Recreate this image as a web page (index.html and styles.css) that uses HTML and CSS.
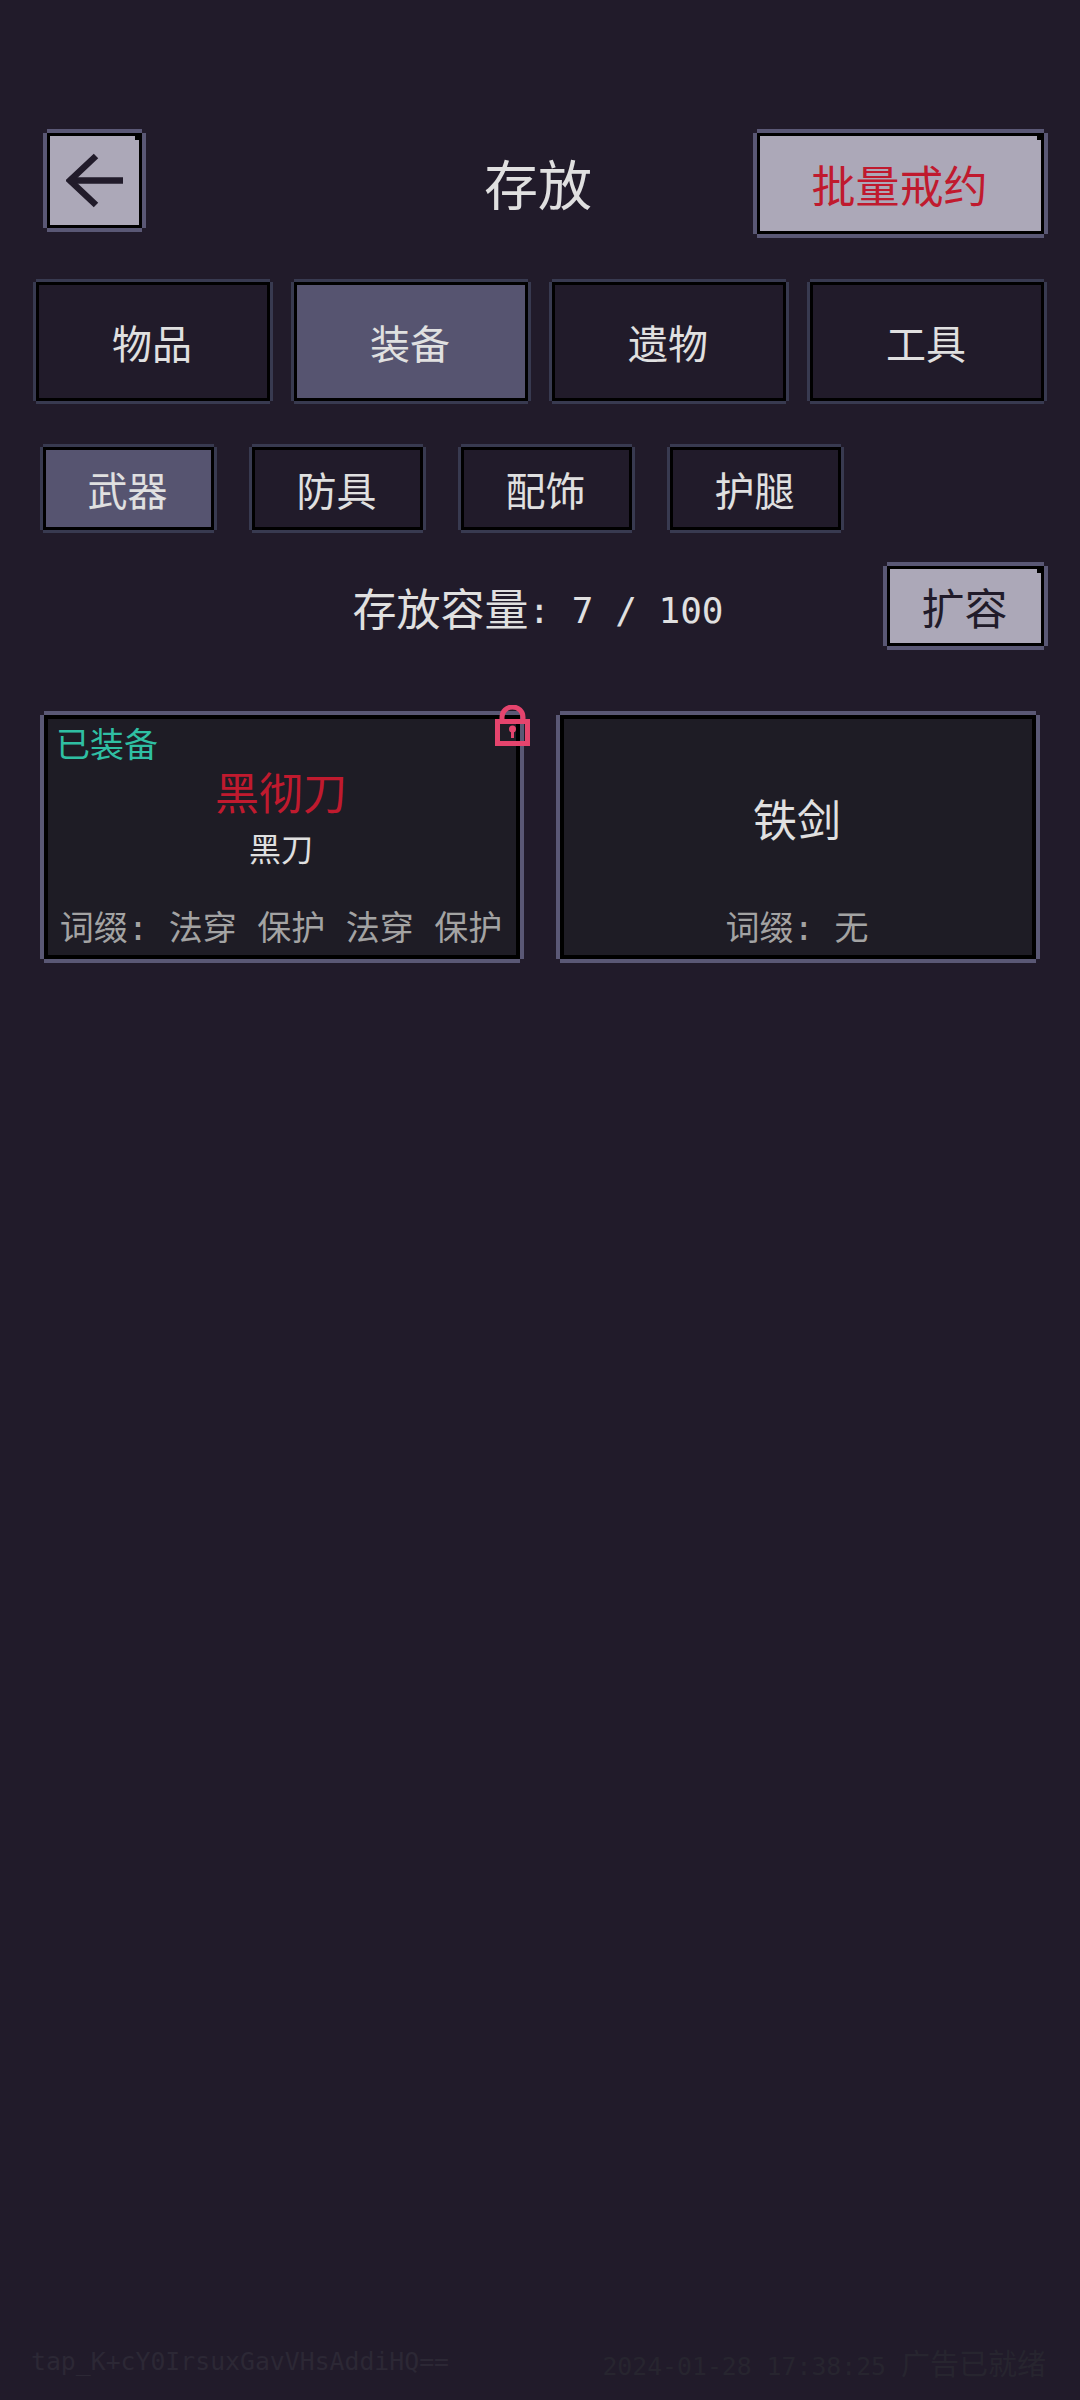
FILE: index.html
```html
<!DOCTYPE html>
<html lang="zh-CN">
<head>
    <meta charset="UTF-8">
    <meta name="viewport" content="width=device-width, initial-scale=1.0">
    <title>存放</title>
    <link rel="stylesheet" href="styles.css">
</head>
<body>
    <div class="page">
        <header class="top-bar">
            <button class="pix raised back-btn" aria-label="返回">
                <svg class="back-icon" viewBox="0 0 57 57">
                    <path d="M30 4 L4 28.5 L30 53" />
                    <path d="M4 28.5 H57" />
                </svg>
            </button>
            <h1 class="title">存放</h1>
            <button class="pix raised batch-btn">批量戒约</button>
        </header>

        <nav class="tabs">
            <button class="pix tab">物品</button>
            <button class="pix tab active">装备</button>
            <button class="pix tab">遗物</button>
            <button class="pix tab">工具</button>
        </nav>

        <nav class="sub-tabs">
            <button class="pix sub-tab active">武器</button>
            <button class="pix sub-tab">防具</button>
            <button class="pix sub-tab">配饰</button>
            <button class="pix sub-tab">护腿</button>
        </nav>

        <section class="capacity-row">
            <p class="capacity">存放容量<span class="mono">: 7 / 100</span></p>
            <button class="pix raised expand-btn">扩容</button>
        </section>

        <section class="cards">
            <article class="pix card">
                <svg class="lock" viewBox="0 0 35 41">
                    <path class="lock-line" d="M7 16 V12 A10.5 10 0 0 1 28 12 V16" />
                    <rect class="lock-line" x="2.5" y="16.5" width="30" height="22" />
                    <circle class="lock-key" cx="17.5" cy="24" r="3.5" />
                    <rect class="lock-key" x="16" y="25" width="3" height="8" />
                </svg>
                <div class="equipped">已装备</div>
                <div class="item-name red">黑彻刀</div>
                <div class="item-base">黑刀</div>
                <div class="affix">词缀: 法穿 保护 法穿 保护</div>
            </article>
            <article class="pix card">
                <div class="item-name solo">铁剑</div>
                <div class="affix">词缀: 无</div>
            </article>
        </section>

        <footer class="foot">
            <span class="foot-id">tap_K+cY0IrsuxGavVHsAddiHQ==</span>
            <span class="foot-status">2024-01-28 17:38:25 <span class="foot-cjk">广告已就绪</span></span>
        </footer>
    </div>
</body>
</html>
```

FILE: styles.css
```css
* {
    box-sizing: border-box;
}
body {
    margin: 0;
    background-color: #211b2a;
    color: #e0e0e0;
    font-family: "Noto Sans CJK SC", "DejaVu Sans", sans-serif;
    font-weight: 400;
}
button {
    font-family: inherit;
    cursor: pointer;
    padding: 0 2px 0 0;
}
.page {
    display: flex;
    flex-direction: column;
    height: 2400px;
    overflow: hidden;
}

/* pixel frame: black border, plus-shaped ring made from four shadows */
.pix {
    --ring: #383a50;
    --ring-w: 3px;
    position: relative;
    border: 3px solid #000;
    background-color: #211b2a;
    color: #e0e0e0;
    box-shadow:
        0 calc(var(--ring-w) * -1) 0 0 var(--ring),
        0 var(--ring-w) 0 0 var(--ring),
        calc(var(--ring-w) * -1) 0 0 0 var(--ring),
        var(--ring-w) 0 0 0 var(--ring);
}
.raised {
    --ring: #5a5875;
    --ring-w: 4px;
    background-color: #aca8b8;
    color: #211b2a;
}
.raised::after {
    content: "";
    position: absolute;
    top: 0;
    right: 0;
    width: 4px;
    height: 4px;
    background-color: #000;
}
.active {
    background-color: #565470;
}

.top-bar {
    display: grid;
    grid-template-columns: 1fr auto 1fr;
    align-items: start;
    padding: 133px 36px 0 32px;
}
.back-btn {
    justify-self: start;
    margin-left: 15px;
    width: 95px;
    height: 95px;
    padding: 0;
    display: flex;
    align-items: center;
    justify-content: center;
}
.back-icon {
    width: 57px;
    height: 57px;
    fill: none;
    stroke: #211b2a;
    stroke-width: 6.5;
}
.title {
    margin: 18px 0 0;
    font-size: 54px;
    font-weight: 400;
    line-height: 64px;
}
.batch-btn {
    justify-self: end;
    width: 287px;
    height: 101px;
    font-size: 44px;
    color: #c01a2e;
}

.tabs {
    display: flex;
    gap: 24px;
    margin-top: 48px;
    padding-left: 36px;
}
.tab {
    width: 234px;
    height: 119px;
    font-size: 40px;
}

.sub-tabs {
    display: flex;
    gap: 38px;
    margin-top: 46px;
    padding-left: 43px;
}
.sub-tab {
    width: 171px;
    height: 83px;
    font-size: 40px;
}

.capacity-row {
    display: grid;
    grid-template-columns: 1fr auto 1fr;
    align-items: center;
    margin-top: 36px;
    padding: 0 36px 0 32px;
}
.capacity {
    grid-column: 2;
    margin: 6px 0 0;
    font-size: 44px;
    line-height: 60px;
    white-space: pre;
}
.mono {
    font-family: "DejaVu Sans Mono", monospace;
    font-size: 36px;
    vertical-align: 3px;
}
.expand-btn {
    grid-column: 3;
    justify-self: end;
    width: 157px;
    height: 80px;
    font-size: 43px;
}

.cards {
    display: grid;
    grid-template-columns: 476px 476px;
    gap: 40px;
    margin-top: 69px;
    padding-left: 44px;
}
.card {
    --ring: #5a5875;
    --ring-w: 4px;
    display: flex;
    flex-direction: column;
    align-items: center;
    height: 244px;
    padding: 2px 9px 7px 7px;
    border-width: 4px;
    background-color: #1e1c25;
}
.lock {
    position: absolute;
    top: -14px;
    right: -14px;
    width: 35px;
    height: 41px;
}
.lock-line {
    fill: none;
    stroke: #e5446d;
    stroke-width: 5;
}
.lock-key {
    fill: #e5446d;
}
.equipped {
    align-self: flex-start;
    padding-left: 1px;
    font-size: 34px;
    line-height: 44px;
    color: #2fbfa3;
}
.item-name {
    font-size: 44px;
    line-height: 52px;
}
.red {
    color: #c01a2e;
}
.solo {
    margin-top: 71px;
}
.item-base {
    margin-top: 10px;
    font-size: 32px;
    line-height: 40px;
}
.affix {
    margin-top: auto;
    font-family: "DejaVu Sans Mono", "Noto Sans CJK SC", monospace;
    font-size: 34px;
    line-height: 40px;
    color: #a3a3a3;
    white-space: nowrap;
}

.foot {
    display: flex;
    justify-content: space-between;
    margin-top: auto;
    padding: 0 34px 16px 31px;
    font-family: "DejaVu Sans Mono", monospace;
    font-size: 24.8px;
    line-height: 34px;
}
.foot-id {
    color: #2c2835;
}
.foot-status {
    color: #27252f;
}
.foot-cjk {
    font-family: "Noto Sans CJK SC", sans-serif;
    font-size: 29px;
}
```
